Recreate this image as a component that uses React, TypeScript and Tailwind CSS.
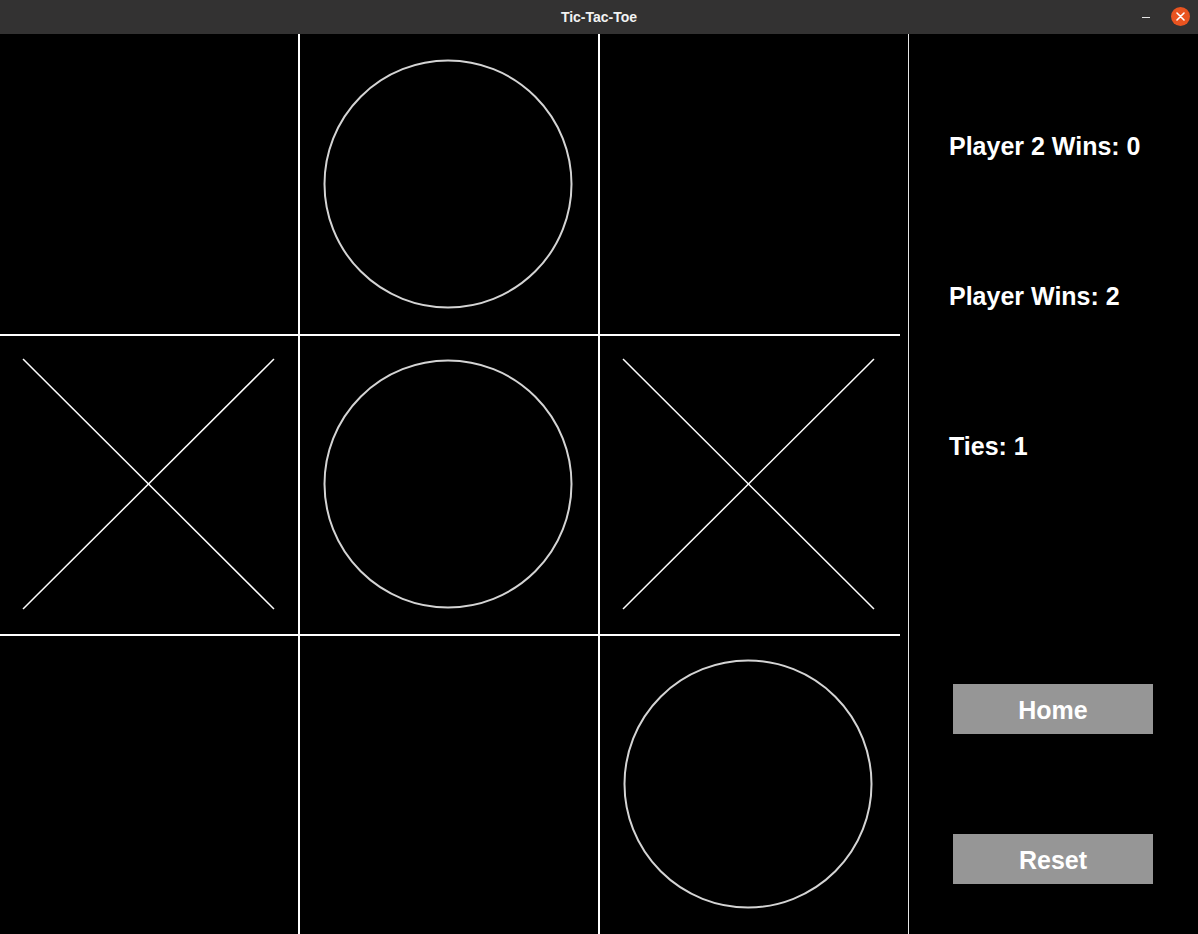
type Mark = "X" | "O" | null;

const board: Mark[] = [null, "O", null, "X", "O", "X", null, null, "O"];

function Board() {
  return (
    <svg width={900} height={900} viewBox="0 0 900 900" className="block shrink-0">
      <rect x={298} y={0} width={2} height={900} fill="#ffffff" />
      <rect x={598} y={0} width={2} height={900} fill="#ffffff" />
      <rect x={0} y={300} width={900} height={2} fill="#ffffff" />
      <rect x={0} y={600} width={900} height={2} fill="#ffffff" />
      {board.map((m, i) => {
        const col = i % 3;
        const row = Math.floor(i / 3);
        const ox = col * 300;
        const oy = row * 300;
        if (m === "O") {
          return (
            <circle
              key={i}
              cx={ox + 148}
              cy={oy + 150}
              r={123.5}
              fill="none"
              stroke="#d4d4d4"
              strokeWidth={2}
            />
          );
        }
        if (m === "X") {
          return (
            <g key={i} stroke="#ffffff" strokeWidth={1.5}>
              <line x1={ox + 23} y1={oy + 25} x2={ox + 274} y2={oy + 275} />
              <line x1={ox + 274} y1={oy + 25} x2={ox + 23} y2={oy + 275} />
            </g>
          );
        }
        return null;
      })}
    </svg>
  );
}

export default function App() {
  const stats = ["Player 2 Wins: 0", "Player Wins: 2", "Ties: 1"];

  return (
    <div className="w-[1198px] h-[934px] bg-black flex flex-col overflow-hidden font-['Liberation_Sans',Arial,sans-serif]">
      {/* title bar */}
      <div className="h-[34px] bg-[#333232] relative flex items-center justify-center shrink-0">
        <span className="text-[14px] font-bold text-[#f2f2f2]">Tic-Tac-Toe</span>
        <div className="absolute right-[8px] top-[7px] flex items-center gap-[21px]">
          <div className="w-[8px] h-[1.5px] bg-[#e6e6e6] mt-[2px]" />
          <div className="w-[19px] h-[19px] rounded-full bg-[#e95420] flex items-center justify-center">
            <svg width="9" height="9" viewBox="0 0 9 9">
              <path d="M1 1 L8 8 M8 1 L1 8" stroke="#ffffff" strokeWidth="1.6" strokeLinecap="round" />
            </svg>
          </div>
        </div>
      </div>

      <div className="flex flex-1">
        <Board />
        <div className="w-[8px] shrink-0" />
        <div className="w-px bg-[#e6e6e6] shrink-0" />
        <div className="flex-1 flex flex-col pl-[40px]">
          <div className="mt-[98px] flex flex-col gap-[122px]">
            {stats.map((s) => (
              <div key={s} className="text-white text-[25px] leading-[28px] font-bold">
                {s}
              </div>
            ))}
          </div>
          <button className="mt-[224px] ml-[4px] w-[200px] h-[50px] pt-[3px] bg-[#969696] text-white text-[25px] font-bold">
            Home
          </button>
          <button className="mt-[100px] ml-[4px] w-[200px] h-[50px] pt-[3px] bg-[#969696] text-white text-[25px] font-bold">
            Reset
          </button>
        </div>
      </div>
    </div>
  );
}
